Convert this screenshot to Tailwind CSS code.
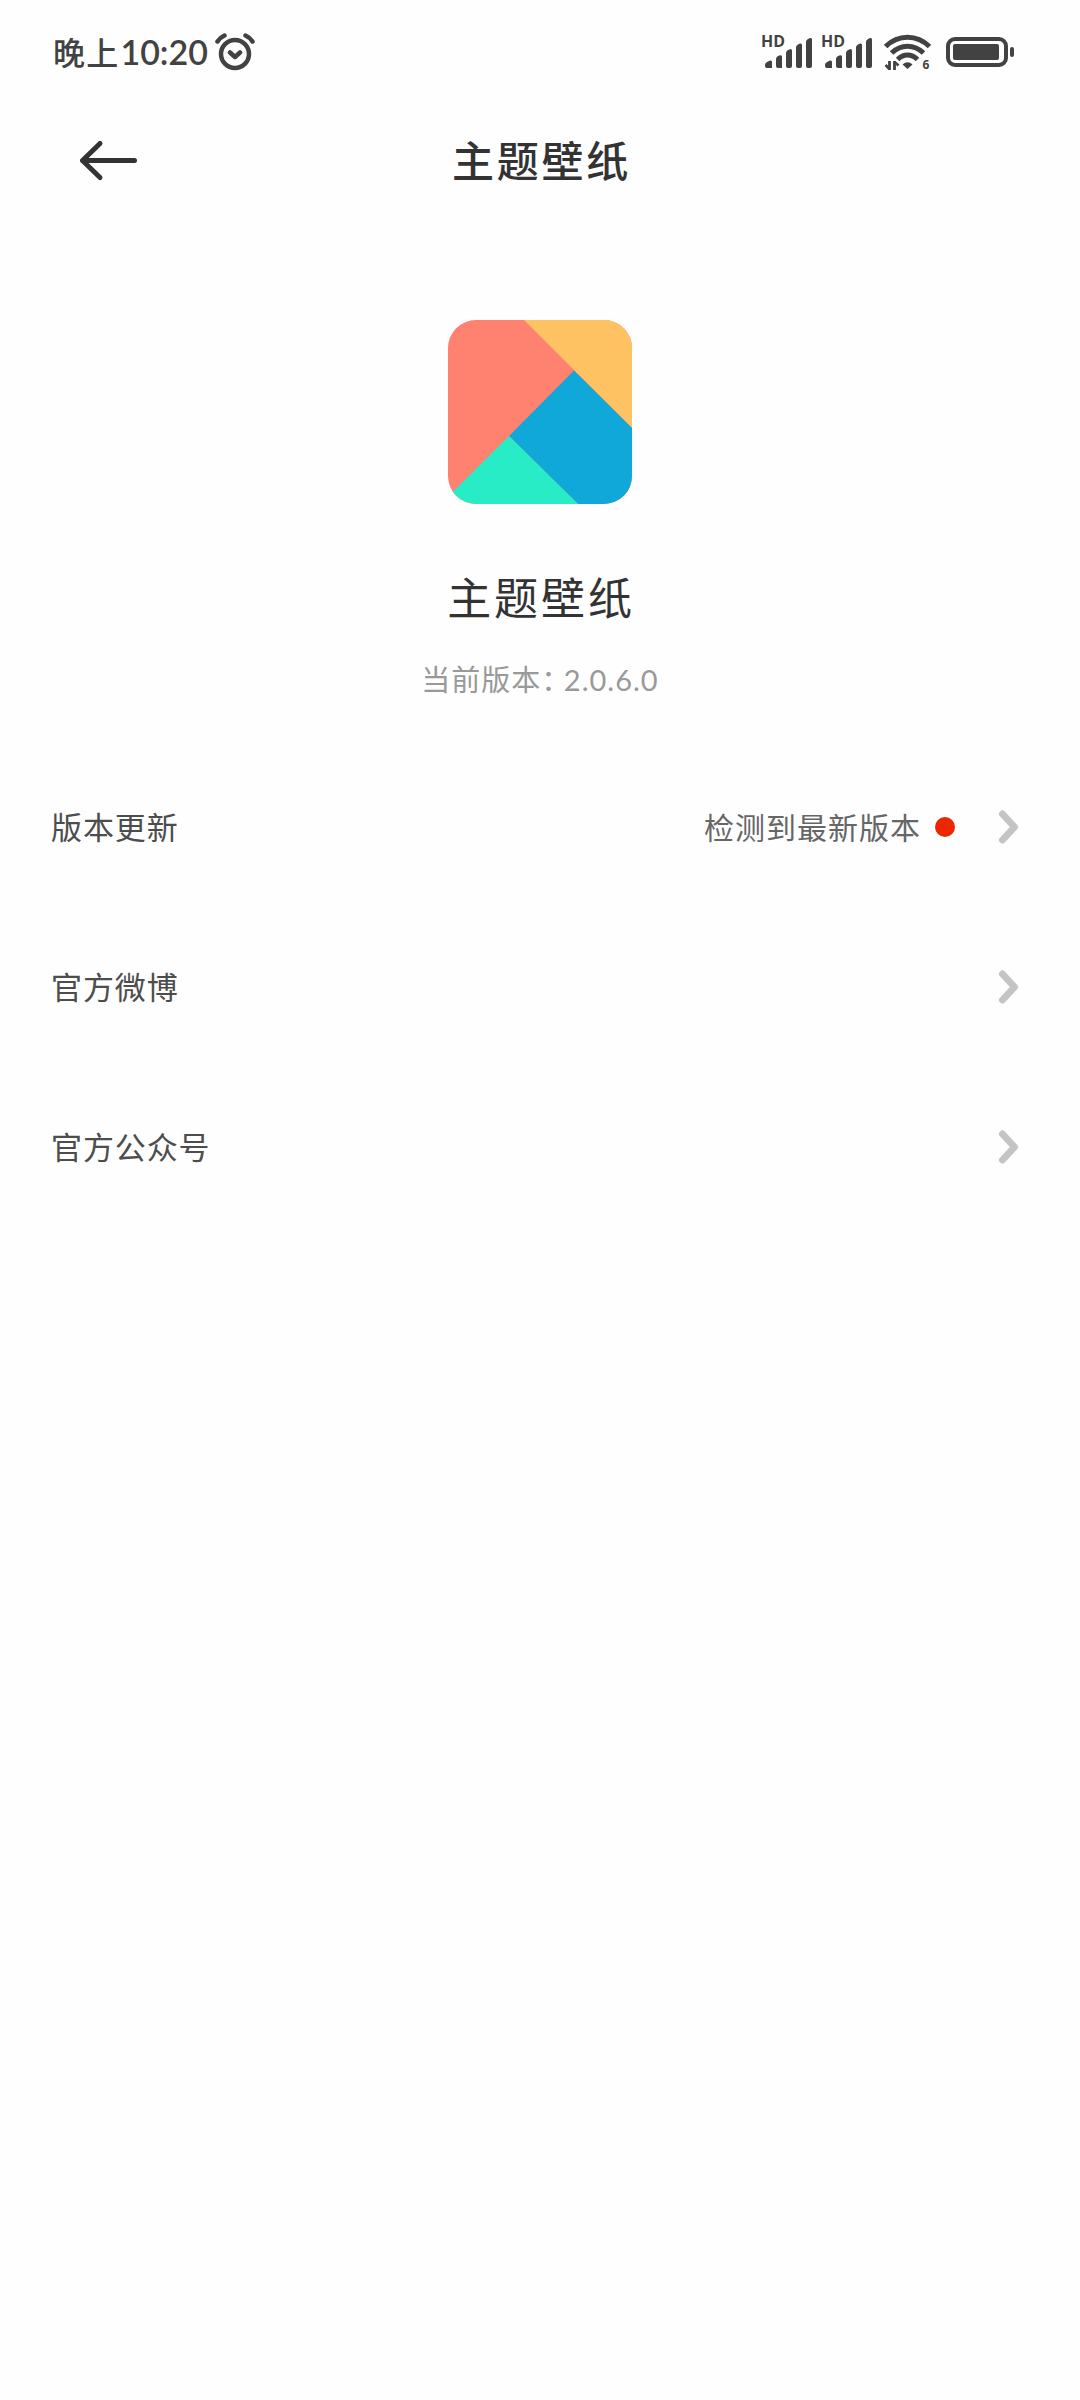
<!DOCTYPE html>
<html lang="zh-CN">
<head>
    <meta charset="UTF-8">
    <title>主题壁纸</title>
    <meta name="viewport" content="width=device-width, initial-scale=1.0">
    <script src="https://cdn.jsdelivr.net/npm/@tailwindcss/browser@4"></script>
</head>
<body class="bg-[#fefefe] min-h-screen flex flex-col text-[#333] font-['Lato','Noto_Sans_CJK_SC',sans-serif]">
    <!-- Status bar -->
    <div class="h-[104px] pl-[53px] pr-[65px] flex items-center justify-between text-[#424242]">
        <div class="flex items-center">
            <span class="pb-[3px] text-[32px] leading-[40px] font-medium tracking-[1.2px] font-['Noto_Sans_CJK_SC',sans-serif]">晚上</span>
            <span class="ml-px text-[34px] leading-[40px] font-semibold">10:20</span>
            <!-- Alarm -->
            <svg class="ml-[7px] mb-px w-10 h-10" viewBox="0 0 40 40" fill="none" stroke="currentColor" stroke-width="4.500" stroke-linecap="round" stroke-linejoin="round">
                <circle cx="20" cy="22" r="14"/>
                <path d="M15 20.500l5 4.500 5-4.500M2.500 9.500q2.500-4 7-6M37.500 9.500q-2.500-4-7-6"/>
            </svg>
        </div>
        <div class="flex items-center">
            <!-- Signal 1 -->
            <svg class="w-[52px] h-10 mb-1 overflow-visible" viewBox="-2 -4 52 40" fill="currentColor">
                <text x="-1" y="13" font-size="15.500" font-weight="700" font-family="Open Sans, sans-serif" textLength="24" lengthAdjust="spacingAndGlyphs">HD</text>
                <path d="M3 31q0-2 2-3l3-1.500q2-.5 2 1.500v6H5q-2 0-2-2zM14 25q0-2 2-3l2-.7q2-.5 2 1.500V34h-4q-2 0-2-2zM24 19q0-2 2-3l2-.8q2-.5 2 1.500V32q0 2-2 2h-2q-2 0-2-2zM34 13.500q0-2 2-3l2-1q2-.5 2 1.500v21q0 2-2 2h-2q-2 0-2-2zM44 8q0-2 2-3l2-1q2-.5 2 1.500V32q0 2-2 2h-2q-2 0-2-2z"/>
            </svg>
            <!-- Signal 2 -->
            <svg class="ml-2 w-[52px] h-10 mb-1 overflow-visible" viewBox="-2 -4 52 40" fill="currentColor">
                <text x="-1" y="13" font-size="15.500" font-weight="700" font-family="Open Sans, sans-serif" textLength="24" lengthAdjust="spacingAndGlyphs">HD</text>
                <path d="M3 31q0-2 2-3l3-1.500q2-.5 2 1.500v6H5q-2 0-2-2zM14 25q0-2 2-3l2-.7q2-.5 2 1.500V34h-4q-2 0-2-2zM24 19q0-2 2-3l2-.8q2-.5 2 1.500V32q0 2-2 2h-2q-2 0-2-2zM34 13.500q0-2 2-3l2-1q2-.5 2 1.500v21q0 2-2 2h-2q-2 0-2-2zM44 8q0-2 2-3l2-1q2-.5 2 1.500V32q0 2-2 2h-2q-2 0-2-2z"/>
            </svg>
            <!-- Wi-Fi 6 -->
            <svg class="ml-3 w-[48px] h-9 overflow-visible" viewBox="0 0 48 36" fill="none" stroke="currentColor">
                <path stroke-width="5" d="M1.600 12.500Q11 3.200 23.500 3.200t22 9.300M7.600 19Q14.500 12.200 23.500 12.200t16 6.800M13.600 25.500Q18 21 23.500 21t10 4.500"/>
                <path fill="currentColor" stroke="none" d="M18.500 30.500q5-4.400 10 0L23.500 35z"/>
                <path stroke-width="2.800" d="M5.500 27v9M10.500 36v-9"/>
                <path stroke-width="2.600" d="M1.500 31L5.500 35M10.500 28l4 3.500"/>
                <text x="38.500" y="35" font-size="12" font-weight="700" font-family="Open Sans, sans-serif" fill="currentColor" stroke="none">6</text>
            </svg>
            <!-- Battery -->
            <svg class="ml-[13px] w-[70px] h-9" viewBox="0 0 70 36" fill="currentColor">
                <rect x="3" y="5" width="58" height="26" rx="7" fill="none" stroke="currentColor" stroke-width="4"/>
                <rect x="8" y="10" width="46" height="16" rx="2"/>
                <rect x="65" y="13" width="4" height="10" rx="2"/>
            </svg>
        </div>
    </div>

    <!-- Header -->
    <header class="h-[112px] px-[76px] grid grid-cols-3 items-center">
        <svg class="w-[64px] h-[44px]" viewBox="0 0 64 44" fill="none" stroke="#333" stroke-width="5" stroke-linecap="round" stroke-linejoin="round">
            <path d="M58.500 22.500H6.500M24 5.500L6.500 22.500l17.500 17"/>
        </svg>
        <h1 class="pt-[2px] pl-[3px] text-center text-[42px] leading-[60px] font-medium tracking-[2.7px] whitespace-nowrap">主题壁纸</h1>
    </header>

    <main>
        <!-- App info -->
        <section class="pt-[104px] flex flex-col items-center">
            <svg class="w-[184px] h-[184px] rounded-[28px]" viewBox="0 0 184 184">
                <path fill="#ff816f" d="M0 0h184v184H0z"/>
                <path fill="#ffc262" d="M76 0h108v108z"/>
                <path fill="#10a8d9" d="M126 50.500l58 57.500V184h-54L61 116z"/>
                <path fill="#28ecc5" d="M61 116l69 68H0v-7.500z"/>
            </svg>
            <h2 class="mt-[62px] pl-[2px] text-[44px] leading-[64px] tracking-[2.9px]">主题壁纸</h2>
            <p class="mt-[29px] flex text-[29px] leading-[42px] tracking-[1px] text-[#999] whitespace-nowrap">
                <span>当前版本</span><span class="mr-[7px] [font-feature-settings:'halt']">：</span><span>2.0.6.0</span>
            </p>
        </section>

        <!-- Links -->
        <ul class="mt-[46px] pl-[51px] pr-[60px] text-[31px] text-[#4d4d4d]">
            <li class="h-[160px] flex items-center">
                <span class="flex-1 tracking-[0.9px]">版本更新</span>
                <span class="text-[30px] tracking-[1px] text-[#666]">检测到最新版本</span>
                <span class="ml-[14px] w-5 h-5 rounded-full bg-[#eb2700]"></span>
                <svg class="ml-[41px] w-6 h-9" viewBox="0 0 24 36" fill="none" stroke="#c4c4c4" stroke-width="7" stroke-linecap="round" stroke-linejoin="round"><path d="M6.500 5l12 13-12 13"/></svg>
            </li>
            <li class="h-[160px] flex items-center">
                <span class="flex-1 tracking-[0.9px]">官方微博</span>
                <svg class="w-6 h-9" viewBox="0 0 24 36" fill="none" stroke="#c4c4c4" stroke-width="7" stroke-linecap="round" stroke-linejoin="round"><path d="M6.500 5l12 13-12 13"/></svg>
            </li>
            <li class="h-[160px] flex items-center">
                <span class="flex-1 tracking-[0.9px]">官方公众号</span>
                <svg class="w-6 h-9" viewBox="0 0 24 36" fill="none" stroke="#c4c4c4" stroke-width="7" stroke-linecap="round" stroke-linejoin="round"><path d="M6.500 5l12 13-12 13"/></svg>
            </li>
        </ul>
    </main>
</body>
</html>
